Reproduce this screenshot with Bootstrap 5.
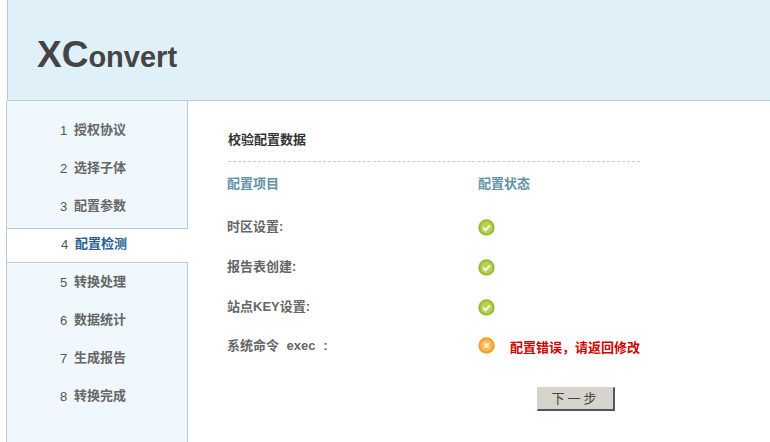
<!DOCTYPE html>
<html lang="zh-CN">
<head>
  <meta charset="UTF-8" />
  <title>XConvert</title>
  <link rel="stylesheet" href="https://cdn.jsdelivr.net/npm/bootstrap@5.3.0/dist/css/bootstrap.min.css" />
  <style>
    body { font-family: "Liberation Sans", "Noto Sans CJK SC", sans-serif; font-size: 13px; background: #fff; color: #555; overflow: hidden; }
    .page-wrap { height: 442px; padding-left: 6px; }
    .top-head { height: 101px; margin-left: 1px; background: #dff0f9; border-left: 1px solid #b9ccd8; border-bottom: 1px solid #b9ccd8; padding: 33px 0 0 29px; }
    .logo-text { font-weight: 700; font-size: 29px; line-height: 44px; color: #444; }
    .logo-text b { font-size: 37px; }
    .side-col { width: 182px; height: 341px; flex: none; }
    .step-group { background: #f0f8fd; border-left: 1px solid #b9ccd8; border-right: 1px solid #b9ccd8; }
    .step-first { padding-top: 10px; padding-bottom: 3px; border-bottom: 1px solid #b9ccd8; }
    .step-last { height: 180px; border-top: 1px solid #b9ccd8; }
    .step-item { height: 38px; padding-left: 53px; }
    .step-now { height: 33px; padding: 0 0 3px 54px; border-left: 1px solid #b9ccd8; }
    .step-num { width: 10px; font-size: 13px; color: #555; padding-top: 2px; }
    .step-name { font-weight: 700; color: #666; }
    .step-now .step-name { color: #1f5f96; }
    .main-col { padding: 30px 0 0 39px; }
    .main-title { width: 412px; height: 31px; margin-left: 1px; line-height: 18px; font-weight: 700; color: #333; border-bottom: 1px dashed #c8c8c8; }
    .check-grid { display: grid; grid-template-columns: 251px 200px; grid-template-rows: 44px repeat(4, 40px); margin-top: 1px; width: 500px; }
    .check-cell { font-weight: 700; color: #666; display: flex; align-items: center; }
    .check-head { color: #5f93a5; padding-bottom: 3px; }
    .check-msg { color: #d40000; margin-left: 15px; margin-top: 2px; white-space: nowrap; }
    .check-cmd { word-spacing: 4px; padding-bottom: 2px; }
    .err-icon { margin-bottom: 4px; }
    .next-btn { display: block; width: 78px; height: 24px; margin: 20px 0 0 310px; padding: 0; font-size: 13px; font-weight: 400; letter-spacing: 3px; line-height: 20px; color: #444; background: #d6d3cc; border: 1px solid #d6d3cc; border-right: 2px solid #555; border-bottom: 2px solid #555; border-radius: 0; }
  </style>
</head>
<body>
  <div class="page-wrap">
    <div class="top-head">
      <div class="logo-text"><b>XC</b>onvert</div>
    </div>
    <div class="d-flex">
      <div class="side-col">
        <div class="step-group step-first">
          <div class="step-item d-flex align-items-center"><span class="step-num">1</span><span class="step-name ms-1">授权协议</span></div>
          <div class="step-item d-flex align-items-center"><span class="step-num">2</span><span class="step-name ms-1">选择子体</span></div>
          <div class="step-item d-flex align-items-center"><span class="step-num">3</span><span class="step-name ms-1">配置参数</span></div>
        </div>
        <div class="step-now d-flex align-items-center"><span class="step-num">4</span><span class="step-name ms-1">配置检测</span></div>
        <div class="step-group step-last">
          <div class="step-item d-flex align-items-center"><span class="step-num">5</span><span class="step-name ms-1">转换处理</span></div>
          <div class="step-item d-flex align-items-center"><span class="step-num">6</span><span class="step-name ms-1">数据统计</span></div>
          <div class="step-item d-flex align-items-center"><span class="step-num">7</span><span class="step-name ms-1">生成报告</span></div>
          <div class="step-item d-flex align-items-center"><span class="step-num">8</span><span class="step-name ms-1">转换完成</span></div>
        </div>
      </div>
      <div class="main-col flex-grow-1">
        <div class="main-title">校验配置数据</div>
        <div class="check-grid">
          <div class="check-cell check-head">配置项目</div>
          <div class="check-cell check-head">配置状态</div>

          <div class="check-cell">时区设置:</div>
          <div class="check-cell">
            <svg width="17" height="17" viewBox="0 0 17 17"><circle cx="8.5" cy="8.5" r="8.2" fill="#9dbb3c"/><circle cx="8.5" cy="8.5" r="6" fill="#b8d24e"/><path d="M5 8.6l2.6 2.5 4.4-4.6" fill="none" stroke="#f4f8e2" stroke-width="2.2"/></svg>
          </div>

          <div class="check-cell">报告表创建:</div>
          <div class="check-cell">
            <svg width="17" height="17" viewBox="0 0 17 17"><circle cx="8.5" cy="8.5" r="8.2" fill="#9dbb3c"/><circle cx="8.5" cy="8.5" r="6" fill="#b8d24e"/><path d="M5 8.6l2.6 2.5 4.4-4.6" fill="none" stroke="#f4f8e2" stroke-width="2.2"/></svg>
          </div>

          <div class="check-cell">站点KEY设置:</div>
          <div class="check-cell">
            <svg width="17" height="17" viewBox="0 0 17 17"><circle cx="8.5" cy="8.5" r="8.2" fill="#9dbb3c"/><circle cx="8.5" cy="8.5" r="6" fill="#b8d24e"/><path d="M5 8.6l2.6 2.5 4.4-4.6" fill="none" stroke="#f4f8e2" stroke-width="2.2"/></svg>
          </div>

          <div class="check-cell check-cmd">系统命令 exec :</div>
          <div class="check-cell">
            <svg class="err-icon" width="17" height="17" viewBox="0 0 17 17"><circle cx="8.5" cy="8.5" r="8.2" fill="#f0a02e"/><circle cx="8.5" cy="8.5" r="6" fill="#f8bb58"/><path d="M6.2 6.2l4.6 4.6M10.8 6.2l-4.6 4.6" fill="none" stroke="#fdecc8" stroke-width="2.2"/></svg>
            <span class="check-msg">配置错误，请返回修改</span>
          </div>
        </div>
        <button type="button" class="next-btn">下一步</button>
      </div>
    </div>
  </div>
</body>
</html>
